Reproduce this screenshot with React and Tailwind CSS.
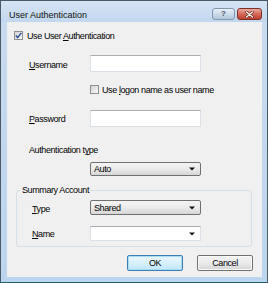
import React from "react";

function Check({ checked }) {
  return (
    <div className="w-[9px] h-[9px] shrink-0 border border-[#8e8f8f] bg-gradient-to-br from-[#d4d4d4] to-[#f9f9f9] flex items-center justify-center">
      {checked && (
        <svg width="7" height="7" viewBox="0 0 7 7">
          <path d="M0.8 3.6 L2.7 5.6 L6.3 0.8" fill="none" stroke="#2b4e98" strokeWidth="1.4" />
        </svg>
      )}
    </div>
  );
}

function Arrow() {
  return (
    <svg width="6" height="4" viewBox="0 0 6 4" className="shrink-0">
      <path d="M0 0.5 H6 L3 3.5 Z" fill="#111" />
    </svg>
  );
}

function Select({ value, h }) {
  return (
    <div
      className={`w-[111px] ${h} flex items-center pl-[3px] pr-[5px] border border-[#707070] rounded-[2px] bg-gradient-to-b from-[#f4f4f4] via-[#ebebeb] to-[#d6d6d6]`}
    >
      <span>{value}</span>
      <span className="ml-auto flex">
        <Arrow />
      </span>
    </div>
  );
}

function Input() {
  return (
    <div className="w-[111px] h-[17px] bg-white border border-[#dbdfe6] border-t-[#abadb3]" />
  );
}

export default function App() {
  return (
    <div className="w-[268px] h-[283px] flex flex-col border border-[#4b5a69] border-b-[#235f70] bg-gradient-to-b from-[#c9dbef] to-[#bcd4ee] font-['Liberation_Sans',Arial,sans-serif] text-[9px] tracking-[-0.4px] text-black leading-[12px]">
      {/* title bar */}
      <div className="h-[21px] shrink-0 flex items-start pl-[8px] pr-[5px] bg-gradient-to-b from-[#d6e4f4] to-[#c2d7ee]">
        <span className="mt-[8px] tracking-normal text-[#101010]">User Authentication</span>
        <div className="ml-auto mt-[7px] flex gap-[2px]">
          <div className="w-[23px] h-[12px] rounded-[3px] border border-[#8296ad] bg-gradient-to-b from-[#e8eff7] via-[#cddbea] to-[#b3c7dd] flex items-center justify-center">
            <span className="text-[8px] leading-[8px] font-bold text-[#4a5668] tracking-normal">?</span>
          </div>
          <div className="w-[25px] h-[12px] rounded-[3px] border border-[#7c2f25] bg-gradient-to-b from-[#e9ab9f] via-[#d56a5a] to-[#c0402e] flex items-center justify-center">
            <svg width="9" height="7" viewBox="0 0 9 7">
              <path d="M1.5 1 L7.5 6 M7.5 1 L1.5 6" stroke="#5a2018" strokeWidth="2.6" strokeLinecap="round" />
              <path d="M1.5 1 L7.5 6 M7.5 1 L1.5 6" stroke="#ffffff" strokeWidth="1.4" strokeLinecap="round" />
            </svg>
          </div>
        </div>
      </div>

      {/* content */}
      <div className="flex-1 ml-[6px] mr-[5px] mb-[5px] bg-[#f0f0f0] flex flex-col">
        {/* row 1 */}
        <div className="mt-[9px] h-[9px] flex items-center pl-[7px] gap-[4px]">
          <Check checked />
          <span>
            Use User <span className="underline">A</span>uthentication
          </span>
        </div>

        {/* Username */}
        <div className="mt-[15px] h-[17px] flex items-center">
          <span className="w-[83px] pl-[22px] mt-[2px]">
            <span className="underline">U</span>sername
          </span>
          <Input />
        </div>

        {/* logon checkbox */}
        <div className="mt-[13px] h-[9px] flex items-center pl-[83px] gap-[3px]">
          <Check />
          <span>
            Use <span className="underline">l</span>ogon name as user name
          </span>
        </div>

        {/* Password */}
        <div className="mt-[16px] h-[17px] flex items-center">
          <span className="w-[83px] pl-[22px] mt-[1px]">
            <span className="underline">P</span>assword
          </span>
          <Input />
        </div>

        {/* Auth type label */}
        <div className="mt-[18px] h-[10px] flex items-center pl-[22px]">
          <span>
            Authentication t<span className="underline">y</span>pe
          </span>
        </div>

        {/* Auto select */}
        <div className="mt-[7px] flex pl-[83px]">
          <Select value="Auto" h="h-[14px]" />
        </div>

        {/* group */}
        <div className="relative mt-[14px] ml-[9px] w-[236px] h-[57px] border border-[#d5dfe5] rounded-[3px] flex flex-col">
          <span className="absolute left-[4px] top-[-7px] px-[1px] bg-[#f0f0f0]">Summary Account</span>
          <div className="mt-[9px] flex items-center">
            <span className="w-[73px] pl-[15px] mt-[2px]">
              <span className="underline">T</span>ype
            </span>
            <Select value="Shared" h="h-[15px]" />
          </div>
          <div className="mt-[11px] flex items-center">
            <span className="w-[73px] pl-[15px] mt-[1px]">
              <span className="underline">N</span>ame
            </span>
            <div className="w-[111px] h-[15px] bg-white border border-[#dbdfe6] border-t-[#abadb3] flex items-center pr-[5px]">
              <span className="ml-auto flex">
                <Arrow />
              </span>
            </div>
          </div>
        </div>

        {/* buttons */}
        <div className="mt-[8px] flex justify-end pr-[9px] gap-[14px]">
          <div className="w-[56px] h-[16px] rounded-[2px] border border-[#3c7fb1] shadow-[inset_0_0_0_1px_#a8dcf7] bg-gradient-to-b from-[#eaf6fd] via-[#d9f0fc] to-[#bee6fd] flex items-center justify-center">
            <span>OK</span>
          </div>
          <div className="w-[56px] h-[16px] rounded-[2px] border border-[#707070] shadow-[inset_0_0_0_1px_#fbfbfb] bg-gradient-to-b from-[#f2f2f2] via-[#ebebeb] to-[#d4d4d4] flex items-center justify-center">
            <span>Cancel</span>
          </div>
        </div>
      </div>
    </div>
  );
}
